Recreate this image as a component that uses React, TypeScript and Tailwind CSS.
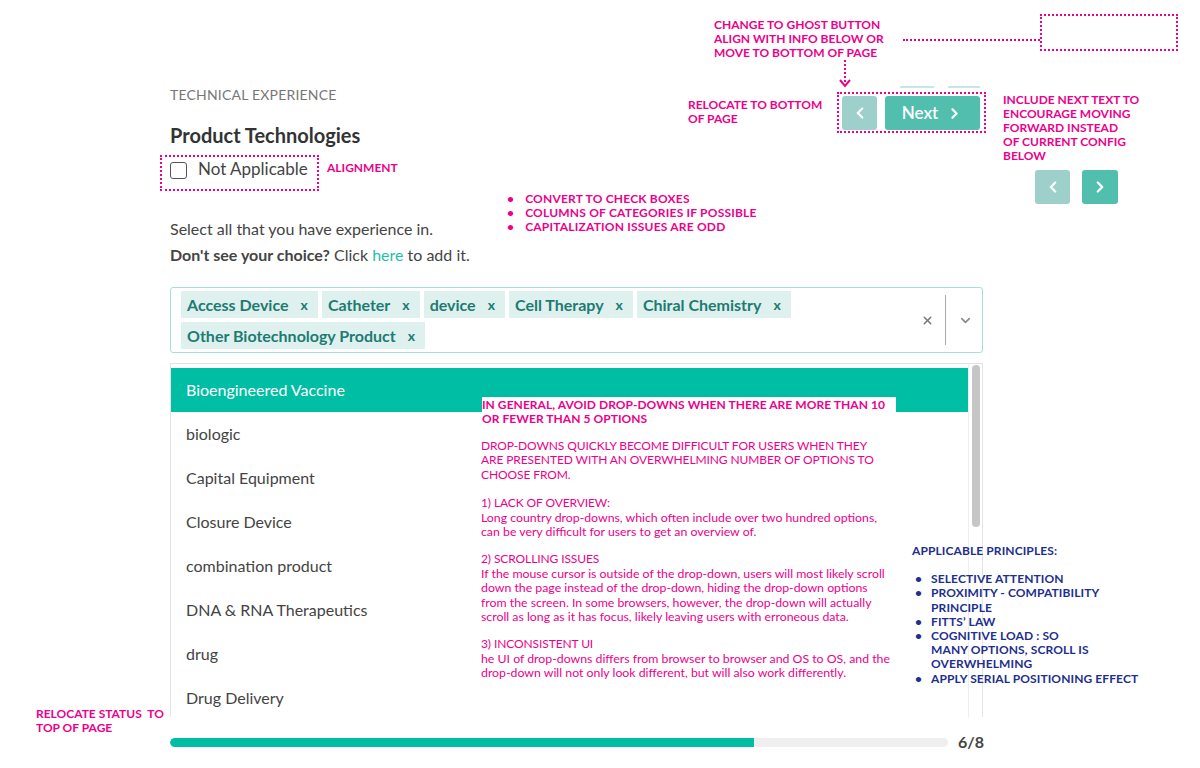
import React from 'react'
import { ChevronLeft, ChevronRight, ChevronDown, X } from 'lucide-react'

const tagsRow1 = ['Access Device', 'Catheter', 'device', 'Cell Therapy', 'Chiral Chemistry']
const tagsRow2 = ['Other Biotechnology Product']

const options = [
    'Bioengineered Vaccine',
    'biologic',
    'Capital Equipment',
    'Closure Device',
    'combination product',
    'DNA & RNA Therapeutics',
    'drug',
    'Drug Delivery',
]

const principles = [
    ['SELECTIVE ATTENTION'],
    ['PROXIMITY - COMPATIBILITY', 'PRINCIPLE'],
    ['FITTS’ LAW'],
    ['COGNITIVE LOAD : SO', 'MANY OPTIONS, SCROLL IS', 'OVERWHELMING'],
    ['APPLY SERIAL POSITIONING EFFECT'],
]

const Tag = ({ label }: { label: string }) => (
    <span className="flex items-center h-[27px] pl-[6px] pr-[10px] gap-[12px] bg-[#dff1ef] text-[#1d7b72] text-[16px] font-bold">
        {label}
        <span className="text-[14px] font-bold">x</span>
    </span>
)

const App = () => {
    return (
        <div className="relative w-[1200px] h-[768px] overflow-hidden bg-white font-['Lato','Noto_Sans',sans-serif] text-[#444]">
            {/* Form column */}
            <main className="w-[813px] ml-[170px] pt-[85px]">
                <div className="flex justify-between items-start">
                    <div>
                        <p className="text-[14px] leading-[20px] text-[#777] tracking-[0.2px]">TECHNICAL EXPERIENCE</p>
                        <h1 className="mt-4 text-[20px] leading-[28px] font-bold text-[#333]">Product Technologies</h1>
                    </div>
                    <div className="mt-[11px] mr-[3px] flex gap-2">
                        <button className="w-[35px] h-[34px] rounded-[3px] bg-[#9dd0ca] flex items-center justify-center text-white">
                            <ChevronLeft size={18} strokeWidth={3} />
                        </button>
                        <button className="w-[95px] h-[34px] rounded-[3px] bg-[#52bfae] flex items-center justify-center gap-2 text-white text-[17px] font-semibold">
                            Next
                            <ChevronRight size={17} strokeWidth={3} />
                        </button>
                    </div>
                </div>

                <label className="mt-2 h-6 flex items-center gap-[11px] text-[17px] text-[#444]">
                    <span className="w-[17px] h-[17px] mt-[3px] rounded-[3px] border-[1.5px] border-[#555]" />
                    Not Applicable
                </label>

                <p className="mt-[35px] text-[16px] leading-[26px]">Select all that you have experience in.</p>
                <p className="text-[16px] leading-[26px]">
                    <span className="font-bold">Don't see your choice?</span> Click <span className="text-[#1fbfa6]">here</span> to add it.
                </p>

                {/* Multi select */}
                <div className="mt-[19px] h-[66px] flex border border-[#a6e0d8] rounded-[3px]">
                    <div className="flex-1 pl-[10px] pt-[3px] flex flex-col gap-1">
                        <div className="flex gap-[4px]">
                            {tagsRow1.map((t) => (
                                <Tag key={t} label={t} />
                            ))}
                        </div>
                        <div className="flex gap-[4px]">
                            {tagsRow2.map((t) => (
                                <Tag key={t} label={t} />
                            ))}
                        </div>
                    </div>
                    <div className="flex items-center pr-[9px]">
                        <X size={13} strokeWidth={2.75} className="text-[#777] mr-[11px]" />
                        <span className="w-px h-[50px] bg-[#aaa]" />
                        <ChevronDown size={15} strokeWidth={2.5} className="text-[#888] ml-[12px]" />
                    </div>
                </div>

                {/* Open menu (cut off at the bottom) */}
                <div className="mt-[10px] h-[354px] flex border border-b-0 border-[#e4e4e4] overflow-hidden">
                    <ul className="flex-1 pt-1">
                        {options.map((o, i) => (
                            <li
                                key={o}
                                className={
                                    i === 0
                                        ? 'h-11 flex items-center pl-[15px] text-[16px] bg-[#00bea4] text-white'
                                        : 'h-11 flex items-center pl-[15px] text-[16px] text-[#444]'
                                }
                            >
                                {o}
                            </li>
                        ))}
                    </ul>
                    <div className="w-[14px] border-l border-[#eee] pt-[1px] flex justify-center">
                        <div className="w-[8px] h-[162px] rounded-full bg-[#c6c6c6]" />
                    </div>
                </div>

                {/* Progress */}
                <div className="mt-[13px] flex items-center gap-[10px]">
                    <div className="flex-1 h-[9px] rounded-full bg-[#efefef] overflow-hidden">
                        <div className="h-full rounded-l-full bg-[#00bea4]" style={{ width: '75%' }} />
                    </div>
                    <span className="text-[16px] font-bold text-[#444] w-[25px]">6/8</span>
                </div>
            </main>

            {/* ---- Annotations ---- */}
            <div className="absolute left-[714px] top-[18px] text-[12px] leading-[14px] font-bold text-[#ec008c]">
                <p>CHANGE TO GHOST BUTTON</p>
                <p>ALIGN WITH INFO BELOW OR</p>
                <p>MOVE TO BOTTOM OF PAGE</p>
            </div>
            <div className="absolute left-[903px] top-[39px] w-[137px] border-t-2 border-dotted border-[#ec008c]" />
            <div className="absolute left-[1040px] top-[14px] w-[138px] h-[37px] border-2 border-dotted border-[#ec008c]" />
            <svg className="absolute left-[838px] top-[58px]" width="14" height="32" viewBox="0 0 14 32">
                <line x1="7" y1="2" x2="7" y2="26" stroke="#ec008c" strokeWidth="2" strokeDasharray="2 2" />
                <path d="M2 22 L7 28 L12 22" fill="none" stroke="#ec008c" strokeWidth="2" />
            </svg>
            <div className="absolute left-[900px] top-[86px] w-[34px] h-[2px] bg-[#c4e9e3]" />
            <div className="absolute left-[948px] top-[86px] w-[32px] h-[2px] bg-[#c4e9e3]" />
            <div className="absolute left-[837px] top-[92px] w-[149px] h-[41px] border-2 border-dotted border-[#ec008c]" />

            <div className="absolute left-[688px] top-[98px] text-[12px] leading-[14px] font-bold text-[#ec008c]">
                <p>RELOCATE TO BOTTOM</p>
                <p>OF PAGE</p>
            </div>

            <div className="absolute left-[1003px] top-[93px] text-[12px] leading-[14px] font-bold text-[#ec008c]">
                <p>INCLUDE NEXT TEXT TO</p>
                <p>ENCOURAGE MOVING</p>
                <p>FORWARD INSTEAD</p>
                <p>OF CURRENT CONFIG</p>
                <p>BELOW</p>
            </div>
            <div className="absolute left-[1035px] top-[170px] flex gap-[12px]">
                <span className="w-[35px] h-[34px] rounded-[3px] bg-[#9dd0ca] flex items-center justify-center text-white">
                    <ChevronLeft size={18} strokeWidth={3} />
                </span>
                <span className="w-[36px] h-[34px] rounded-[3px] bg-[#52bfae] flex items-center justify-center text-white">
                    <ChevronRight size={18} strokeWidth={3} />
                </span>
            </div>

            <div className="absolute left-[160px] top-[155px] w-[159px] h-[36px] border-2 border-dotted border-[#ec008c]" />
            <p className="absolute left-[327px] top-[161px] text-[12px] leading-[14px] font-bold text-[#ec008c]">ALIGNMENT</p>

            <ul className="absolute left-[507px] top-[192px] text-[12px] leading-[14px] font-bold text-[#ec008c] tracking-[0.2px]">
                {['CONVERT TO CHECK BOXES', 'COLUMNS OF CATEGORIES IF POSSIBLE', 'CAPITALIZATION ISSUES ARE ODD'].map((t) => (
                    <li key={t} className="flex gap-[11px]">
                        <span>•</span>
                        {t}
                    </li>
                ))}
            </ul>

            {/* dropdown critique */}
            <div className="absolute left-[482px] top-[397px] w-[414px] bg-white text-[12px] leading-[14px] font-bold text-[#ec008c] tracking-[0.05px] pt-[1px]">
                <p>IN GENERAL, AVOID DROP-DOWNS WHEN THERE ARE MORE THAN 10</p>
                <p>OR FEWER THAN 5 OPTIONS</p>
            </div>
            <div className="absolute left-[481px] top-[439px] w-[430px] text-[12px] leading-[14.4px] text-[#ec008c] tracking-[-0.1px]">
                <p>DROP-DOWNS QUICKLY BECOME DIFFICULT FOR USERS WHEN THEY</p>
                <p>ARE PRESENTED WITH AN OVERWHELMING NUMBER OF OPTIONS TO</p>
                <p>CHOOSE FROM.</p>
                <p className="mt-[14px]">1) LACK OF OVERVIEW:</p>
                <div className="text-[12.3px] tracking-normal">
                    <p>Long country drop-downs, which often include over two hundred options,</p>
                    <p>can be very difficult for users to get an overview of.</p>
                </div>
                <p className="mt-[13px]">2) SCROLLING ISSUES</p>
                <div className="text-[12.3px] tracking-normal">
                    <p>If the mouse cursor is outside of the drop-down, users will most likely scroll</p>
                    <p>down the page instead of the drop-down, hiding the drop-down options</p>
                    <p>from the screen. In some browsers, however, the drop-down will actually</p>
                    <p>scroll as long as it has focus, likely leaving users with erroneous data.</p>
                </div>
                <p className="mt-[13px]">3) INCONSISTENT UI</p>
                <div className="text-[12.3px] tracking-normal">
                    <p>he UI of drop-downs differs from browser to browser and OS to OS, and the</p>
                    <p>drop-down will not only look different, but will also work differently.</p>
                </div>
            </div>

            {/* principles */}
            <div className="absolute left-[912px] top-[544px] text-[12px] leading-[14.2px] font-bold text-[#1e2f8f] tracking-[0.1px]">
                <p>APPLICABLE PRINCIPLES:</p>
                <ul className="mt-[14px]">
                    {principles.map((lines) => (
                        <li key={lines[0]} className="flex gap-[9px]">
                            <span className="pl-[3px]">•</span>
                            <span>
                                {lines.map((l) => (
                                    <span key={l} className="block">{l}</span>
                                ))}
                            </span>
                        </li>
                    ))}
                </ul>
            </div>

            <div className="absolute left-[36px] top-[707px] text-[12px] leading-[14px] font-bold text-[#ec008c]">
                <p>RELOCATE STATUS&nbsp; TO</p>
                <p>TOP OF PAGE</p>
            </div>
        </div>
    )
}

export default App
